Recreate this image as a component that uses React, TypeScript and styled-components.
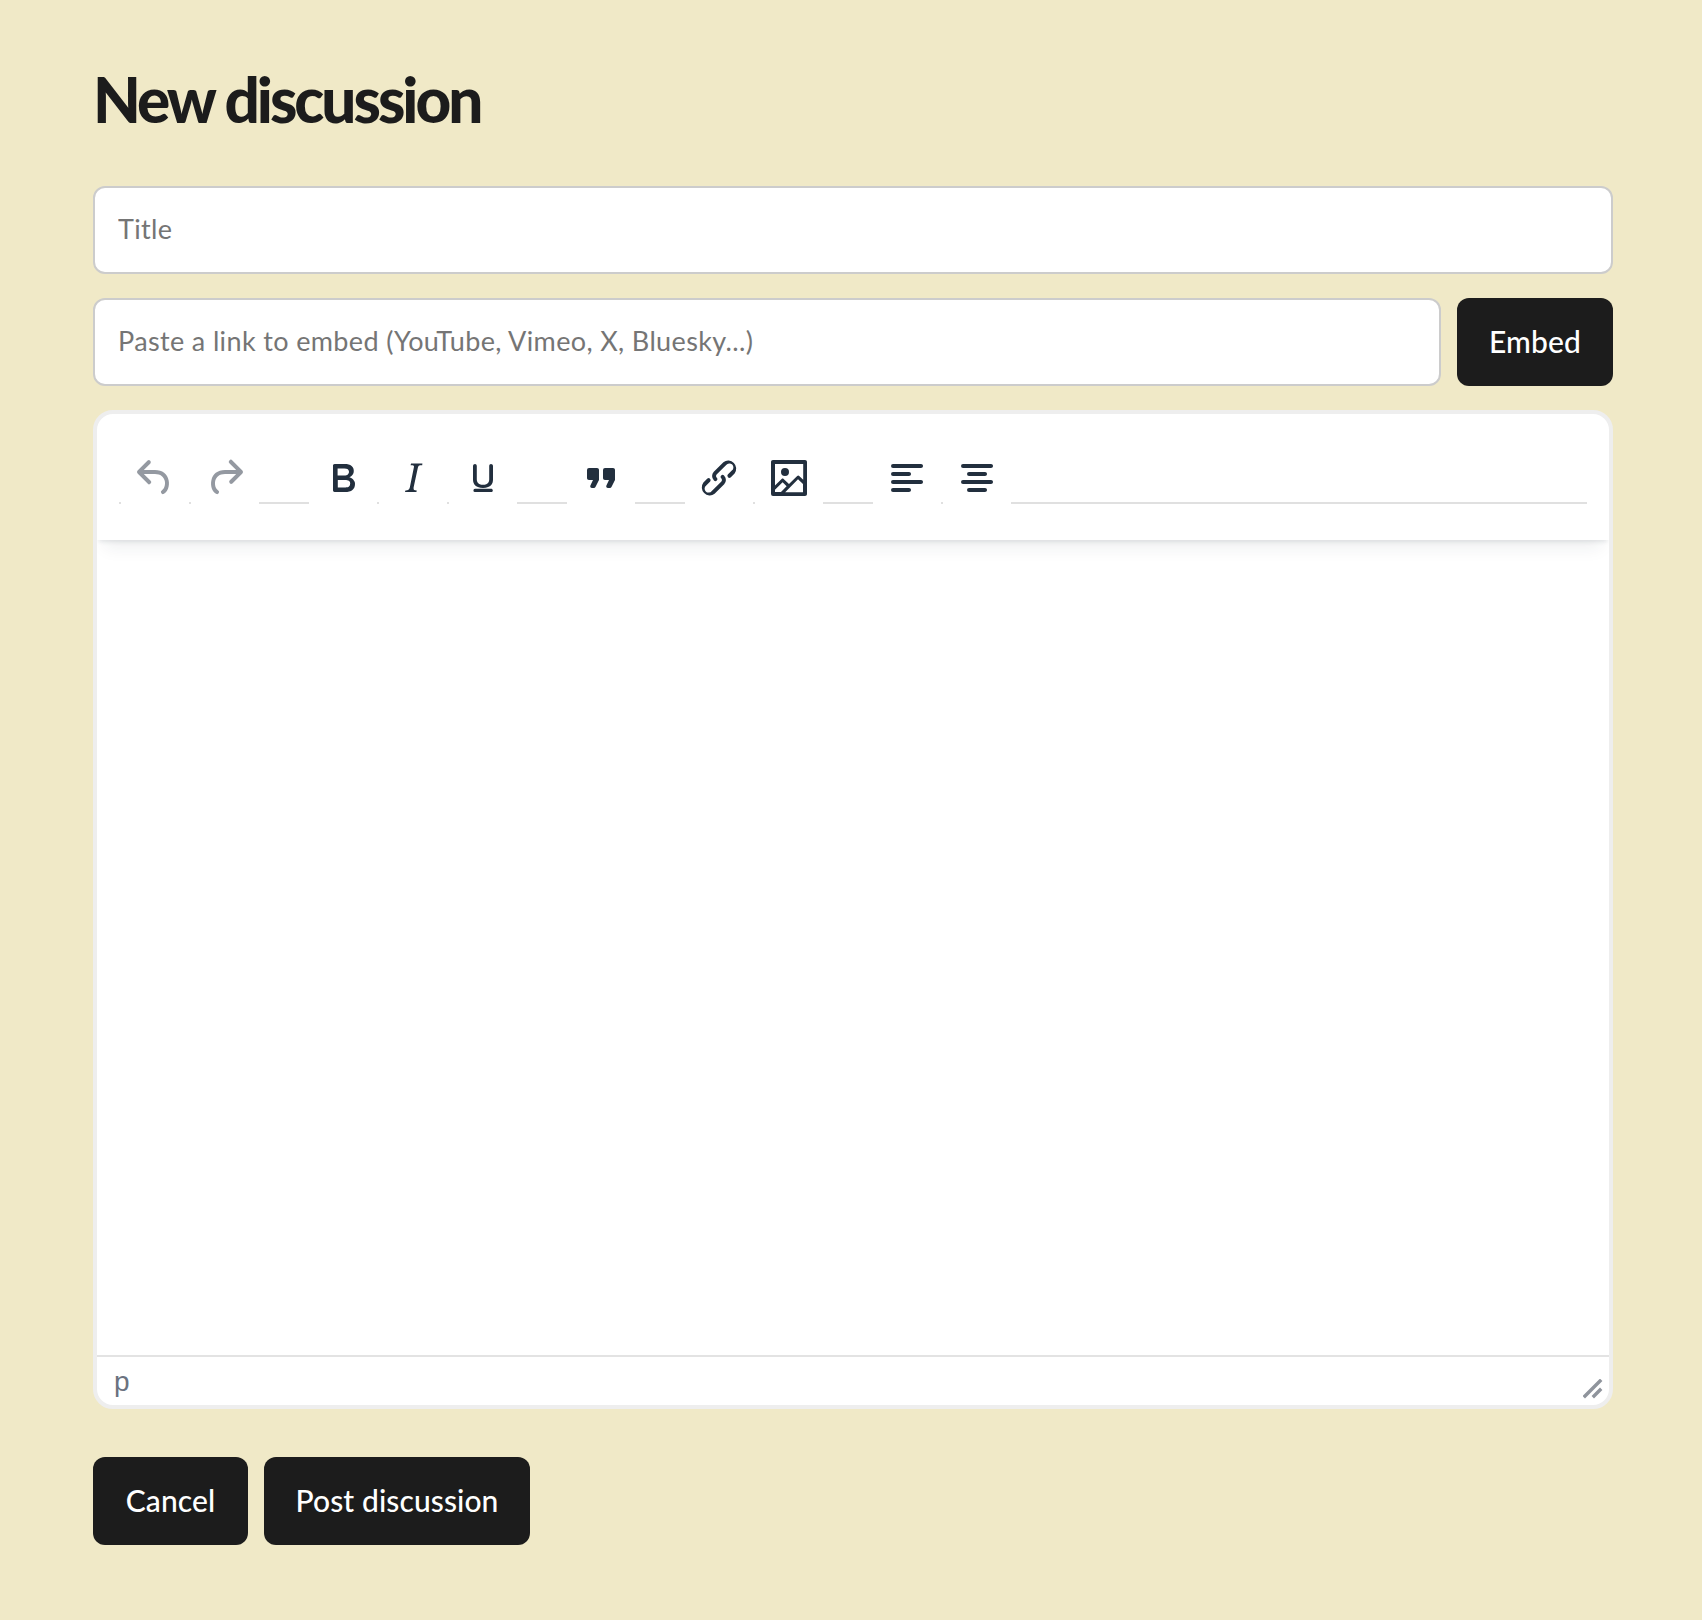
import React from "react";
import styled, { createGlobalStyle } from "styled-components";

const Global = createGlobalStyle`
  html, body { margin: 0; padding: 0; background: #f0e9c7; }
  * { box-sizing: border-box; }
`;

const Page = styled.main`
  width: 1702px;
  height: 1620px;
  padding: 0 89px 0 93px;
  display: flex;
  flex-direction: column;
  background: #f0e9c7;
  font-family: "Lato", "Open Sans", sans-serif;
`;

const Heading = styled.h1`
  margin: 0;
  height: 186px;
  padding-top: 60px;
  font-family: "Lato", sans-serif;
  font-weight: 900;
  font-size: 62px;
  line-height: 78px;
  letter-spacing: -3px;
  color: #1c1c1c;
`;

const TextField = styled.input`
  display: block;
  height: 88px;
  width: 100%;
  min-width: 0;
  padding: 0 23px 4px;
  background: #fff;
  border: 2px solid #cccccc;
  border-radius: 12px;
  font-family: inherit;
  font-size: 27px;
  letter-spacing: 0.36px;
  color: #1c1c1c;
  outline: none;
  &::placeholder { color: #757575; opacity: 1; }
`;

const EmbedRow = styled.div`
  display: flex;
  gap: 16px;
  margin-top: 24px;
  align-items: flex-start;
`;

const DarkButton = styled.button<{ $w: number }>`
  flex: none;
  height: 88px;
  width: ${(p) => p.$w}px;
  padding: 0 0 3px;
  border: 0;
  border-radius: 12px;
  background: #1c1c1c;
  color: #fff;
  font-family: inherit;
  font-weight: 500;
  font-size: 30px;
  letter-spacing: 0.1px;
`;

const Editor = styled.section`
  margin-top: 24px;
  height: 999px;
  display: flex;
  flex-direction: column;
  background: #fff;
  border: 4px solid #eeeeee;
  border-radius: 20px;
  overflow: hidden;
`;

const Header = styled.div`
  flex: none;
  height: 126px;
  padding: 22px 22px 0;
  position: relative;
  box-shadow: 0 4px 4px -2px rgba(34, 47, 62, 0.1), 0 16px 16px -8px rgba(34, 47, 62, 0.07);
`;

const Toolbar = styled.div`
  display: flex;
  height: 68px;
  background: linear-gradient(#e0e0e0, #e0e0e0) left bottom / 100% 2px no-repeat;
`;

const Group = styled.div`
  display: flex;
  gap: 2px;
  padding: 0 2px;
  margin-right: 46px;
  background: linear-gradient(#fff, #fff) 0 0 / 100% 66px no-repeat,
    linear-gradient(#e0e0e0, #e0e0e0) left bottom / 100% 2px no-repeat;
  &:last-child { margin-right: 0; }
`;

const ToolButton = styled.div<{ $muted?: boolean }>`
  width: 68px;
  height: 68px;
  background: #fff;
  display: flex;
  justify-content: center;
  align-items: flex-end;
  padding-bottom: 2px;
  color: ${(p) => (p.$muted ? "#9499a1" : "#222f3e")};
`;

const ToolIcon = styled.svg`
  width: 48px;
  height: 48px;
  fill: currentColor;
  display: block;
`;

const Content = styled.div`
  flex: 1;
`;

const StatusBar = styled.div`
  flex: none;
  height: 50px;
  border-top: 2px solid #e3e3e3;
  padding: 2px 6px 0 17px;
  display: flex;
  align-items: center;
  justify-content: space-between;
`;

const Path = styled.span`
  font-family: "Liberation Sans", sans-serif;
  font-size: 28px;
  line-height: 1;
  color: #6b7280;
`;

const Grip = styled.svg`
  width: 20px;
  height: 20px;
  display: block;
  margin-top: 14px;
`;

const Actions = styled.div`
  display: flex;
  gap: 16px;
  margin-top: 48px;
`;

const paths: Record<string, string> = {
  undo: "M6.4 8H12c3.7 0 6.2 2 6.8 5.1.6 2.7-.4 5.6-2.3 6.8a1 1 0 0 1-1-1.8c1.1-.6 1.8-2.7 1.4-4.6-.5-2.1-2.1-3.5-4.9-3.5H6.4l3.3 3.3a1 1 0 1 1-1.4 1.4l-5-5a1 1 0 0 1 0-1.4l5-5a1 1 0 0 1 1.4 1.4L6.4 8Z",
  redo: "M17.6 10H12c-2.8 0-4.4 1.4-4.9 3.5-.4 2 .3 4 1.4 4.6a1 1 0 1 1-1 1.8c-2-1.2-2.9-4.1-2.3-6.8.6-3 3-5.1 6.8-5.1h5.6l-3.3-3.3a1 1 0 1 1 1.4-1.4l5 5a1 1 0 0 1 0 1.4l-5 5a1 1 0 0 1-1.4-1.4l3.3-3.3Z",
  bold: "M7.8 19c-.3 0-.5 0-.6-.2l-.2-.5V5.7c0-.2 0-.4.2-.5l.6-.2h5c1.5 0 2.7.3 3.5 1 .7.6 1.1 1.4 1.1 2.5a3 3 0 0 1-.6 1.9c-.4.6-1 1-1.6 1.2.4.1.9.3 1.3.6s.8.7 1 1.2c.4.4.5 1 .5 1.6 0 1.3-.4 2.3-1.3 3-.8.7-2.1 1-3.8 1H7.8Zm5-8.3c.6 0 1.2-.1 1.6-.5.4-.3.6-.7.6-1.3 0-1.1-.8-1.7-2.3-1.7H9.3v3.5h3.4Zm.5 6c.7 0 1.3-.1 1.7-.4.4-.4.6-.9.6-1.5s-.2-1-.7-1.4c-.4-.3-1-.4-2-.4H9.4v3.8h4Z",
  italic: "M16.7 4.7l-.1.9h-.3c-.6 0-1 0-1.4.3-.3.3-.4.6-.5 1.1l-2.1 9.8v.6c0 .5.4.8 1.4.8h.2l-.2.8H8l.2-.8h.2c1.1 0 1.8-.5 2-1.5l2-9.8.1-.5c0-.6-.4-.8-1.4-.8h-.3l.2-.9h5.8Z",
  underline: "M16 5c.5 0 1 .4 1 1v7c0 .8-.2 1.5-.6 2.1-.9 1.3-2.5 1.9-4.4 1.9s-3.5-.6-4.4-1.9A3.8 3.8 0 0 1 7 13V6c0-.6.5-1 1-1s.9.4.9 1v6.8c0 .5.1 1 .4 1.4.5.8 1.5 1.2 2.7 1.2s2.2-.4 2.7-1.2c.3-.4.4-.9.4-1.4V6c0-.6.4-1 .9-1ZM8 17.4h8c.5 0 .9.3.9.8s-.4.8-.9.8H8a.8.8 0 0 1 0-1.6Z",
  quote: "M7.5 17h.9c.4 0 .7-.2.9-.6L11 13V8c0-.6-.4-1-1-1H6a1 1 0 0 0-1 1v4c0 .6.4 1 1 1h2l-1.3 2.7a1 1 0 0 0 .8 1.3Zm8 0h.9c.4 0 .7-.2.9-.6L19 13V8c0-.6-.4-1-1-1h-4a1 1 0 0 0-1 1v4c0 .6.4 1 1 1h2l-1.3 2.7a1 1 0 0 0 .8 1.3Z",
  link: "M6.2 12.3a1 1 0 0 1 1.4 1.4l-2 2a2 2 0 1 0 2.8 2.8l4.8-4.8a1 1 0 0 0 0-1.4 1 1 0 1 1 1.4-1.4 3 3 0 0 1 0 4.2l-4.8 4.8a4 4 0 0 1-5.6-5.6l2-2Zm11.6-.6a1 1 0 0 1-1.4-1.4l2-2a2 2 0 1 0-2.8-2.8l-4.8 4.8a1 1 0 0 0 0 1.4 1 1 0 1 1-1.4 1.4 3 3 0 0 1 0-4.2l4.8-4.8a4 4 0 0 1 5.6 5.6l-2 2Z",
  image: "M5 15.7l3.3-3.2c.3-.3.7-.3 1 0L12 15l4.1-4c.3-.4.8-.4 1 0l2 1.9V5H5v10.7ZM5 18V19h3l2.8-2.9-2-2L5 17.9Zm14-3l-2.5-2.4-6.4 6.5H19v-4ZM4 3h16c.6 0 1 .4 1 1v16c0 .6-.4 1-1 1H4a1 1 0 0 1-1-1V4c0-.6.4-1 1-1Zm6 8a2 2 0 1 0 0-4 2 2 0 0 0 0 4Z",
  left: "M5 5h14c.6 0 1 .4 1 1s-.4 1-1 1H5a1 1 0 1 1 0-2Zm0 4h8c.6 0 1 .4 1 1s-.4 1-1 1H5a1 1 0 1 1 0-2Zm0 8h8c.6 0 1 .4 1 1s-.4 1-1 1H5a1 1 0 0 1 0-2Zm0-4h14c.6 0 1 .4 1 1s-.4 1-1 1H5a1 1 0 0 1 0-2Z",
  center: "M5 5h14c.6 0 1 .4 1 1s-.4 1-1 1H5a1 1 0 1 1 0-2Zm3 4h8c.6 0 1 .4 1 1s-.4 1-1 1H8a1 1 0 1 1 0-2Zm0 8h8c.6 0 1 .4 1 1s-.4 1-1 1H8a1 1 0 0 1 0-2Zm-3-4h14c.6 0 1 .4 1 1s-.4 1-1 1H5a1 1 0 0 1 0-2Z",
};

const groups: string[][] = [
  ["undo", "redo"],
  ["bold", "italic", "underline"],
  ["quote"],
  ["link", "image"],
  ["left", "center"],
];

function Tool({ name }: { name: string }) {
  return (
    <ToolButton $muted={name === "undo" || name === "redo"}>
      <ToolIcon viewBox="0 0 24 24">
        <path d={paths[name]} />
      </ToolIcon>
    </ToolButton>
  );
}

export default function App() {
  return (
    <Page>
      <Global />
      <Heading>New discussion</Heading>
      <TextField placeholder="Title" />
      <EmbedRow>
        <TextField placeholder="Paste a link to embed (YouTube, Vimeo, X, Bluesky...)" />
        <DarkButton $w={156}>Embed</DarkButton>
      </EmbedRow>
      <Editor>
        <Header>
          <Toolbar>
            {groups.map((g) => (
              <Group key={g[0]}>
                {g.map((n) => (
                  <Tool key={n} name={n} />
                ))}
              </Group>
            ))}
          </Toolbar>
        </Header>
        <Content />
        <StatusBar>
          <Path>p</Path>
          <Grip viewBox="0 0 20 20">
            <path d="M2 17 L17 2 M11 17 L17 11" stroke="#8f949c" strokeWidth="3.4" strokeLinecap="square" fill="none" />
          </Grip>
        </StatusBar>
      </Editor>
      <Actions>
        <DarkButton $w={155}>Cancel</DarkButton>
        <DarkButton $w={266}>Post discussion</DarkButton>
      </Actions>
    </Page>
  );
}
